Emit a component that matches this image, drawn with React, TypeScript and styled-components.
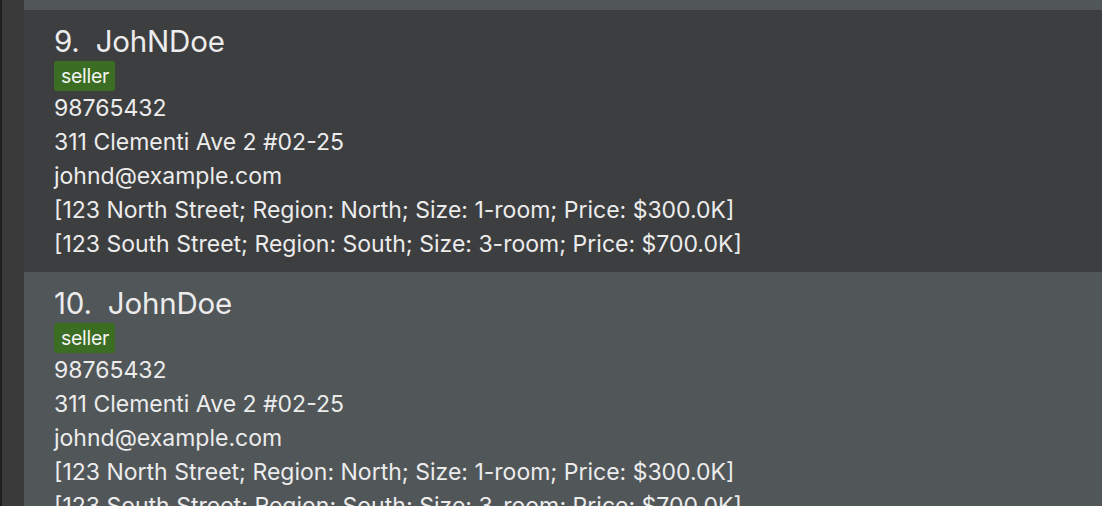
import React from "react";
import styled, { createGlobalStyle } from "styled-components";

const Global = createGlobalStyle`
  html, body { margin: 0; padding: 0; background: #3c3d40; }
  body { font-family: Inter, "Noto Sans", sans-serif; overflow: hidden; }
`;

const Frame = styled.div`
  display: flex;
  width: 1102px;
  height: 506px;
  overflow: hidden;
  background: #3a3a3b;
`;

const EdgeLine = styled.div`
  width: 2px;
  flex: none;
  background: #1e1e1f;
`;

const Gutter = styled.div`
  width: 22px;
  flex: none;
  background: #3a3a3b;
`;

const List = styled.div`
  flex: 1;
  display: flex;
  flex-direction: column;
  margin-top: -252px;
`;

const Card = styled.div<{ $odd: boolean }>`
  height: 262px;
  flex: none;
  box-sizing: border-box;
  padding: 14px 0 0 30px;
  background: ${(p) => (p.$odd ? "#3d3e40" : "#515659")};
  color: #ececec;
`;

const Title = styled.div`
  font-size: 29.5px;
  line-height: 34px;
  height: 34px;
  display: flex;
  gap: 16px;
  letter-spacing: -0.2px;
`;

const TagRow = styled.div`
  display: flex;
  height: 33px;
  padding-top: 3px;
  box-sizing: border-box;
`;

const Tag = styled.span`
  display: inline-block;
  background: #3b6e22;
  color: #f4f4f4;
  font-size: 19.5px;
  line-height: 30px;
  height: 30px;
  padding: 0 6px 0 7px;
  border-radius: 3px;
  letter-spacing: -0.3px;
`;

const Line = styled.div`
  font-size: 23px;
  line-height: 34px;
  height: 34px;
  letter-spacing: 0px;
  white-space: nowrap;
`;

type Person = { idx: number; name: string };

const people: Person[] = [
  { idx: 8, name: "JohnDoe" },
  { idx: 9, name: "JohNDoe" },
  { idx: 10, name: "JohnDoe" },
];

export default function App() {
  return (
    <>
      <Global />
      <Frame>
        <EdgeLine />
        <Gutter />
        <List>
          {people.map((p) => (
            <Card key={p.idx} $odd={p.idx % 2 === 1}>
              <Title>
                <span>{p.idx}.</span>
                <span>{p.name}</span>
              </Title>
              <TagRow>
                <Tag>seller</Tag>
              </TagRow>
              <Line>98765432</Line>
              <Line>311 Clementi Ave 2 #02-25</Line>
              <Line>johnd@example.com</Line>
              <Line>[123 North Street; Region: North; Size: 1-room; Price: $300.0K]</Line>
              <Line>[123 South Street; Region: South; Size: 3-room; Price: $700.0K]</Line>
            </Card>
          ))}
        </List>
      </Frame>
    </>
  );
}
